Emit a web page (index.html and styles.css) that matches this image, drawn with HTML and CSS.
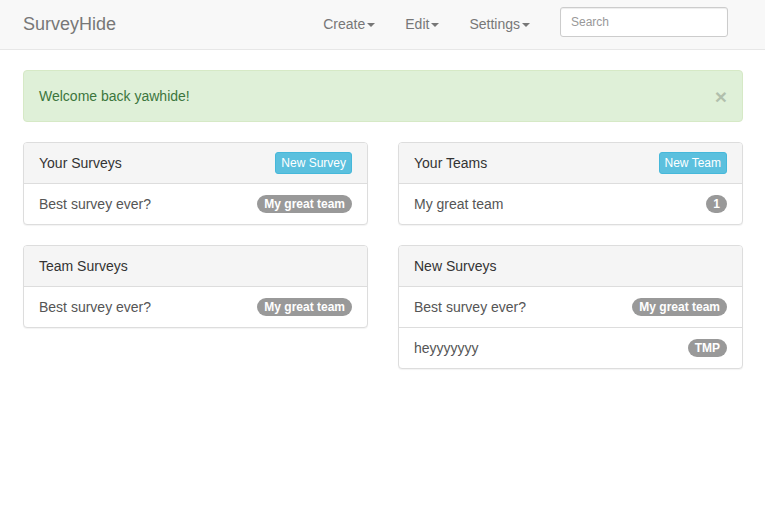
FILE: index.html
```html
<!DOCTYPE html>
<html>
<head>
<meta charset="utf-8">
<link rel="stylesheet" href="styles.css">
</head>
<body>
<nav class="navbar">
  <a class="brand">SurveyHide</a>
  <ul class="nav">
    <li><a>Create<span class="caret"></span></a></li>
    <li><a>Edit<span class="caret"></span></a></li>
    <li><a>Settings<span class="caret"></span></a></li>
  </ul>
  <form class="navbar-form"><input class="search" type="text" placeholder="Search"></form>
</nav>
<div class="container">
  <div class="alert">
    <span>Welcome back yawhide!</span>
    <button class="close" type="button">×</button>
  </div>
  <div class="row">
    <div class="col">
      <div class="panel">
        <div class="panel-heading">
          <span>Your Surveys</span>
          <a class="btn">New Survey</a>
        </div>
        <div class="item"><span>Best survey ever?</span><span class="badge">My great team</span></div>
      </div>
      <div class="panel">
        <div class="panel-heading"><span>Team Surveys</span></div>
        <div class="item"><span>Best survey ever?</span><span class="badge">My great team</span></div>
      </div>
    </div>
    <div class="col">
      <div class="panel">
        <div class="panel-heading">
          <span>Your Teams</span>
          <a class="btn">New Team</a>
        </div>
        <div class="item"><span>My great team</span><span class="badge">1</span></div>
      </div>
      <div class="panel">
        <div class="panel-heading"><span>New Surveys</span></div>
        <div class="item"><span>Best survey ever?</span><span class="badge">My great team</span></div>
        <div class="item"><span>heyyyyyyy</span><span class="badge">TMP</span></div>
      </div>
    </div>
  </div>
</div>
</body>
</html>
```
FILE: styles.css
```css
* { box-sizing: border-box; }
html, body { margin: 0; padding: 0; }
body {
  font-family: "Liberation Sans", Arial, Helvetica, sans-serif;
  font-size: 14px;
  line-height: 20px;
  color: #333;
  background: #fff;
}
.navbar {
  display: flex;
  align-items: flex-start;
  height: 50px;
  background: #f8f8f8;
  border-bottom: 1px solid #e7e7e7;
  padding: 0 22px 0 8px;
  margin-bottom: 20px;
}
.brand {
  font-size: 18px;
  line-height: 20px;
  padding: 14px 15px 15px 15px;
  color: #777;
}
.nav {
  list-style: none;
  margin: 0 0 0 auto;
  padding: 0;
  display: flex;
}
.nav a {
  display: block;
  padding: 14px 15px 15px;
  color: #777;
  line-height: 20px;
}
.caret {
  display: inline-block;
  width: 0;
  height: 0;
  margin-left: 2px;
  vertical-align: middle;
  border-top: 4px solid #777;
  border-left: 4px solid transparent;
  border-right: 4px solid transparent;
}
.navbar-form {
  margin: 7px 15px 0 15px;
}
.search {
  display: block;
  width: 168px;
  height: 30px;
  padding: 5px 10px;
  font-family: inherit;
  font-size: 12px;
  color: #555;
  background: #fff;
  border: 1px solid #ccc;
  border-radius: 3px;
  box-shadow: inset 0 1px 1px rgba(0,0,0,.075);
}
.search::placeholder { color: #999; }
.container {
  padding: 0 22px 0 23px;
}
.alert {
  display: flex;
  justify-content: space-between;
  align-items: center;
  height: 52px;
  padding: 0 15px;
  margin-bottom: 20px;
  background: #dff0d8;
  border: 1px solid #d6e9c6;
  border-radius: 4px;
  color: #3c763d;
}
.close {
  font-family: inherit;
  font-size: 21px;
  font-weight: bold;
  line-height: 20px;
  height: 20px;
  color: #000;
  opacity: .2;
  background: none;
  border: 0;
  padding: 0;
  position: relative;
  top: 1px;
}
.row {
  display: flex;
  gap: 30px;
}
.col { flex: 1 1 0; min-width: 0; }
.panel {
  border: 1px solid #ddd;
  border-radius: 4px;
  margin-bottom: 20px;
  box-shadow: 0 1px 1px rgba(0,0,0,.05);
  background: #fff;
}
.panel-heading {
  display: flex;
  justify-content: space-between;
  align-items: center;
  box-sizing: content-box;
  height: 40px;
  padding: 0 15px;
  background: #f5f5f5;
  border-bottom: 1px solid #ddd;
  border-radius: 3px 3px 0 0;
  color: #333;
}
.btn {
  display: inline-block;
  font-size: 12px;
  line-height: 18px;
  padding: 1px 5px;
  color: #fff;
  background: #5bc0de;
  border: 1px solid #46b8da;
  border-radius: 3px;
}
.item {
  display: flex;
  justify-content: space-between;
  align-items: center;
  box-sizing: content-box;
  height: 40px;
  padding: 0 15px;
  border-top: 1px solid #ddd;
  color: #555;
}
.panel-heading + .item { border-top: 0; }
.badge {
  display: inline-block;
  min-width: 10px;
  padding: 3px 7px;
  font-size: 12px;
  font-weight: bold;
  line-height: 12px;
  color: #fff;
  background: #999;
  border-radius: 10px;
  text-align: center;
}
```
